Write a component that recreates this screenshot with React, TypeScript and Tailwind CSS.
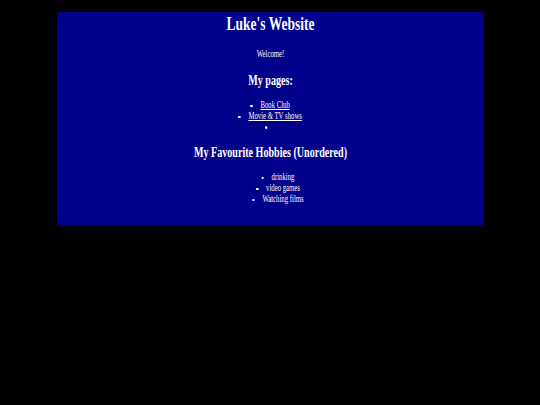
export default function App() {
  const pages = ['Book Club', 'Movie & TV shows']
  const hobbies = ['drinking', 'video games', 'Watching films']

  // small round bullet sitting just before the centred text
  const bullet =
    "relative inline-block min-h-[10.84px] align-top before:absolute before:right-full before:top-[4.9px] before:mr-[10.8px] before:h-[2.5px] before:w-[3.5px] before:rounded-full before:bg-white before:content-['']"

  return (
    <div className="min-h-screen bg-black pt-[12px] font-['Liberation_Serif','Times_New_Roman',serif] text-white">
      {/* main panel */}
      <div className="mx-auto h-[213px] w-[427px] bg-[#00008b] pt-[1px]">
        {/* text column, squeezed sideways like the original capture */}
        <div className="scale-x-[0.716] text-center">
          <h1 className="text-[18.85px] font-bold leading-[21.7px]">Luke's Website</h1>
          <p className="mt-[14.6px] text-[9.42px] leading-[10.84px]">Welcome!</p>

          <h2 className="mt-[11.7px] text-[14.1px] font-bold leading-[16.3px]">My pages:</h2>
          <ul className="mt-[11.7px] pl-[13px] text-[9.42px] leading-[10.84px]">
            {pages.map((p) => (
              <li key={p} className="h-[10.84px]">
                <span className={bullet}>
                  <a href="#" className="underline">
                    {p}
                  </a>
                </span>
              </li>
            ))}
            <li className="h-[10.84px]">
              <span className={bullet}></span>
            </li>
          </ul>

          <h2 className="mt-[11.7px] text-[14.1px] font-bold leading-[16.3px]">
            My Favourite Hobbies (Unordered)
          </h2>
          <ul className="mt-[11.7px] pl-[35px] text-[9.42px] leading-[10.84px]">
            {hobbies.map((h) => (
              <li key={h} className="h-[10.84px]">
                <span className={bullet}>{h}</span>
              </li>
            ))}
          </ul>
        </div>
      </div>
    </div>
  )
}
